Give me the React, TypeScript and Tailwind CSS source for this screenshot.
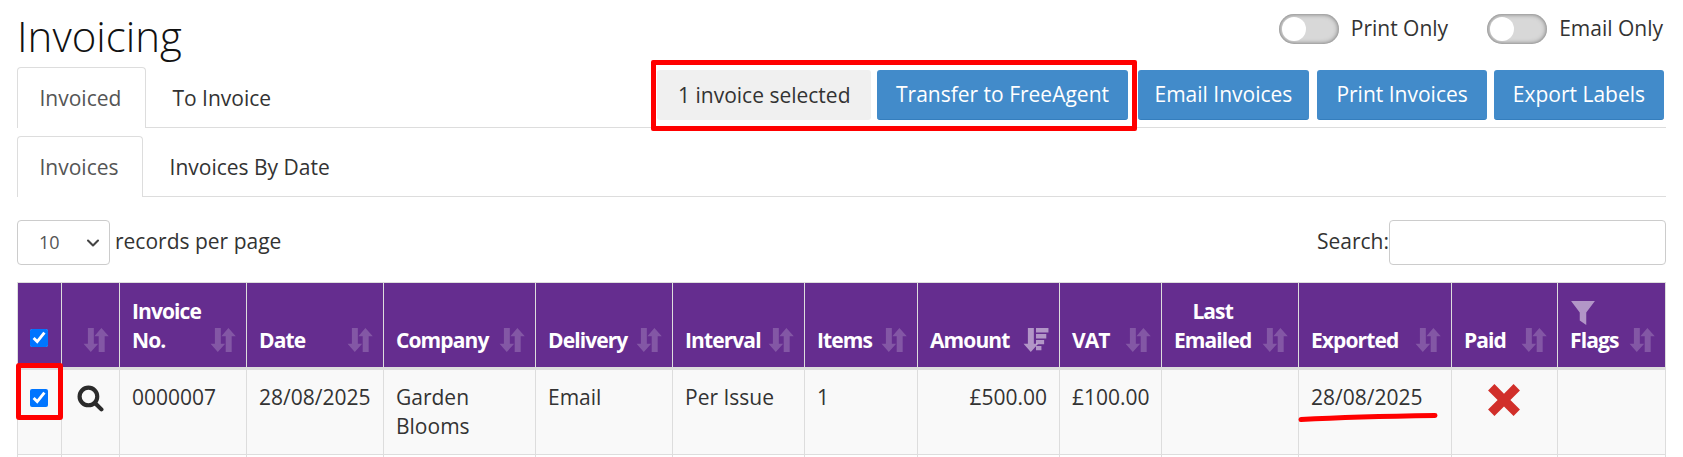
import { ReactNode } from "react"
import { ChevronDown } from "lucide-react"

const SortIcon = ({ className = "" }: { className?: string }) => (
	<svg viewBox="0 0 24 24" className={`w-[26px] h-[26px] shrink-0 fill-white/20 ${className}`}>
		<path d="M4.500 1h5.500v14.500h4L7.200 23 .500 15.500h4z" />
		<path d="M17 1l6.800 7.500H20V23h-5.500V8.500h-4z" />
	</svg>
)

const SortActiveIcon = () => (
	<svg viewBox="0 0 24 24" className="w-[26px] h-[26px] shrink-0 fill-white/50">
		<path d="M4.500 1h5.500v14.500h4L7.200 23 .500 15.500h4z" />
		<path d="M12 1h11.500v4H12zM12 6.500h9.500v4H12zM12 12h7.500v4H12zM12 17.500h5v4h-5z" />
	</svg>
)

const FilterIcon = () => (
	<svg viewBox="0 0 24 24" className="w-[26px] h-[26px] fill-white/50 block">
		<path d="M1 1h22l-8 10.500V23l-6-4v-7.500z" />
	</svg>
)

const CrossIcon = () => (
	<svg viewBox="0 0 32 32" className="w-[34px] h-[34px] fill-[#d12f2a] block">
		<path d="M7 1l9 9 9-9 6 6-9 9 9 9-6 6-9-9-9 9-6-6 9-9-9-9z" />
	</svg>
)

const SearchIcon = () => (
	<svg viewBox="0 0 26 26" className="w-[27px] h-[27px] block fill-none stroke-[#2b2b2b]">
		<circle cx="11" cy="11" r="8.500" strokeWidth="4" />
		<path d="M17.500 17.500l6 6" strokeWidth="4" strokeLinecap="round" />
	</svg>
)

const Toggle = ({ label }: { label: string }) => (
	<div className="flex items-center gap-[12px]">
		<div className="w-[60px] h-[30px] rounded-full bg-[#d8d8d8] p-[3px] shadow-[inset_0_0_5px_#666]">
			<div className="w-[24px] h-[24px] rounded-full bg-white" />
		</div>
		<span>{label}</span>
	</div>
)

const Btn = ({ children, className = "" }: { children: ReactNode; className?: string }) => (
	<button className={`h-[50px] pt-[1px] rounded-[3px] bg-[#428bca] border-b border-[#357ebd] text-white ${className}`}>{children}</button>
)

const Tab = ({ children, active }: { children: ReactNode; active?: boolean }) => (
	<div className={`h-[61px] -mb-px mr-[4px] pt-[2px] pl-[21.5px] pr-[23.5px] flex items-center rounded-t-[4px] border border-b-0 ${active ? "bg-white border-[#ddd] text-[#555]" : "border-transparent"}`}>
		{children}
	</div>
)

const Th = ({ children, icon, center }: { children?: ReactNode; icon?: ReactNode; center?: boolean }) => (
	<th className="border border-b-[3px] border-[#ddd] bg-[#652d8f] text-white font-bold pl-[12px] pr-[10px] pb-[12px] pt-[14px] align-bottom text-left leading-[29px] tracking-[-0.9px]">
		<div className="flex items-end justify-between">
			<div className={center ? "text-center" : ""}>{children}</div>
			<div className="pb-[2px]">{icon ?? <SortIcon />}</div>
		</div>
	</th>
)

const Td = ({ children, className = "" }: { children?: ReactNode; className?: string }) => (
	<td className={`border border-[#ddd] px-[12px] pt-[13px] pb-[13px] align-top leading-[29px] ${className}`}>{children}</td>
)

const Check = () => <input type="checkbox" checked readOnly className="block w-[18px] h-[18px] m-0" />

const colWidths = [44, 58, 127, 137, 152, 137, 132, 113, 142, 102, 137, 153, 106, 108]

export default function App() {
	return (
		<div className="relative h-screen overflow-hidden bg-white px-[17px] text-[21px] text-[#333] font-['Open_Sans',sans-serif]">
			<div className="flex justify-between h-[67px]">
				<h1 className="text-[42px] font-light text-[#111] leading-[64px] pt-[4px]">Invoicing</h1>
				<div className="flex gap-[39px] pt-[14px] mr-[3px] h-[44px]">
					<Toggle label="Print Only" />
					<Toggle label="Email Only" />
				</div>
			</div>

			<div className="flex items-start border-b border-[#ddd] h-[61px]">
				<Tab active>Invoiced</Tab>
				<Tab>To Invoice</Tab>
				<div className="ml-auto mr-[2px] flex mt-[3px]">
					<div className="h-[50px] pt-[1px] px-[21px] flex items-center bg-[#f0f0f0] rounded-[3px] mr-[6px]">1 invoice selected</div>
					<Btn className="px-[18.5px] mr-[10px]">Transfer to FreeAgent</Btn>
					<Btn className="px-[17px] mr-[8px]">Email Invoices</Btn>
					<Btn className="px-[19px] mr-[7px]">Print Invoices</Btn>
					<Btn className="px-[19px]">Export Labels</Btn>
				</div>
			</div>

			<div className="flex border-b border-[#ddd] h-[61px] mt-[8px]">
				<Tab active>Invoices</Tab>
				<Tab>Invoices By Date</Tab>
			</div>

			<div className="flex justify-between items-center mt-[23px] h-[45px]">
				<div className="flex items-center gap-[5px]">
					<div className="relative">
						<select className="block appearance-none w-[93px] h-[45px] px-[21px] border border-[#ccc] rounded-[4px] bg-white text-[#555] text-[18px]" defaultValue="10">
							<option>10</option>
						</select>
						<ChevronDown className="absolute right-[7px] top-[13px] w-[20px] h-[20px] text-[#444] pointer-events-none" strokeWidth={2.5} />
					</div>
					<span className="pb-[2px]">records per page</span>
				</div>
				<div className="flex items-center">
					<span className="pb-[2px]">Search:</span>
					<input className="w-[277px] h-[45px] border border-[#ccc] rounded-[4px]" readOnly />
				</div>
			</div>

			<table className="mt-[17px] table-fixed border-collapse w-[1648px]">
				<colgroup>
					{colWidths.map((w, i) => <col key={i} width={w} />)}
				</colgroup>
				<thead>
					<tr>
						<th className="border border-b-[3px] border-[#ddd] bg-[#652d8f] px-[12px] pb-[20px] align-bottom"><Check /></th>
						<Th />
						<Th>Invoice<br />No.</Th>
						<Th>Date</Th>
						<Th>Company</Th>
						<Th>Delivery</Th>
						<Th>Interval</Th>
						<Th>Items</Th>
						<Th icon={<SortActiveIcon />}>Amount</Th>
						<Th>VAT</Th>
						<Th center>Last<br />Emailed</Th>
						<Th>Exported</Th>
						<Th>Paid</Th>
						<Th><FilterIcon />Flags</Th>
					</tr>
				</thead>
				<tbody>
					<tr className="bg-[#f9f9f9]">
						<Td className="pt-[19px]"><Check /></Td>
						<Td className="pl-[15px] pt-[15px]"><SearchIcon /></Td>
						<Td>0000007</Td>
						<Td>28/08/2025</Td>
						<Td>Garden Blooms</Td>
						<Td>Email</Td>
						<Td>Per Issue</Td>
						<Td>1</Td>
						<Td className="text-right">£500.00</Td>
						<Td>£100.00</Td>
						<Td />
						<Td>28/08/2025</Td>
						<Td className="pl-[35px] pt-[8px]"><CrossIcon /></Td>
						<Td />
					</tr>
					<tr>
						{colWidths.map((_, i) => <Td key={i} />)}
					</tr>
				</tbody>
			</table>

			{/* red marks drawn over the screenshot */}
			<div className="absolute left-[651px] top-[60px] w-[486px] h-[71px] border-[5px] border-[#ff0000] rounded-[2px]" />
			<div className="absolute left-[16px] top-[363px] w-[47px] h-[57px] border-[5px] border-[#ff0000] rounded-[3px]" />
			<svg className="absolute left-[1298px] top-[412px] w-[140px] h-[10px]" viewBox="0 0 140 10">
				<path d="M3 7.500C40 5.500 100 4 137 3.500" fill="none" stroke="#ff0000" strokeWidth="5" strokeLinecap="round" />
			</svg>
		</div>
	)
}
